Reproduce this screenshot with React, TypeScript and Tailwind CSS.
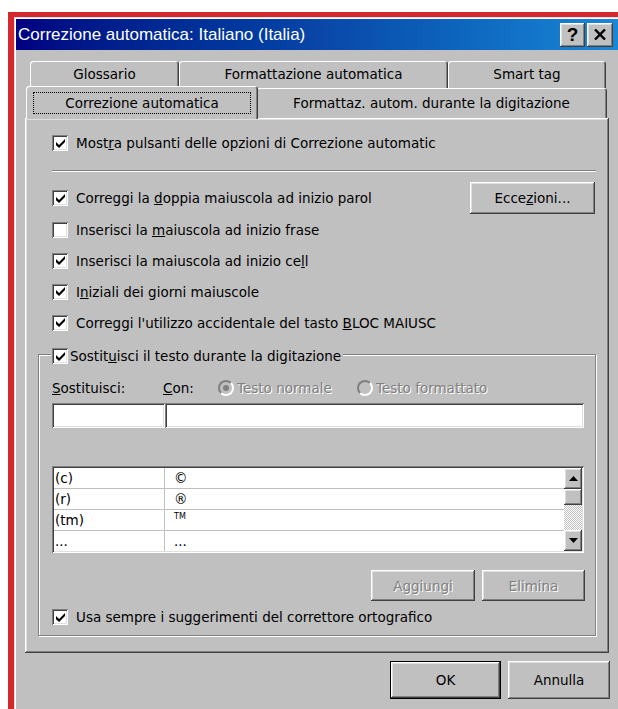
import React from "react";

// classic 3D bevels
const raised =
  "shadow-[inset_-1px_-1px_#404040,inset_1px_1px_#ffffff,inset_-2px_-2px_#808080,inset_2px_2px_#dfdfdf]";
const sunken =
  "shadow-[inset_1px_1px_#808080,inset_-1px_-1px_#ffffff,inset_2px_2px_#404040,inset_-2px_-2px_#dfdfdf]";
const disabledText = "text-[#808080] [text-shadow:1px_1px_0_#ffffff]";

function CheckBox({ checked }: { checked?: boolean }) {
  return (
    <span className={`flex h-[16px] w-[16px] shrink-0 items-center justify-center bg-white ${sunken}`}>
      {checked && (
        <svg width="9" height="9" viewBox="0 0 7 7">
          <polygon points="0,2.4 2.4,4.6 7,0 7,2.4 2.4,7 0,4.8" fill="#000" />
        </svg>
      )}
    </span>
  );
}

function Option({ checked, children }: { checked?: boolean; children: React.ReactNode }) {
  return (
    <div className="flex items-center gap-[8px]">
      <CheckBox checked={checked} />
      <span className="whitespace-nowrap">{children}</span>
    </div>
  );
}

function Radio({ selected }: { selected?: boolean }) {
  return (
    <span className="flex h-[16px] w-[16px] shrink-0 items-center justify-center rounded-full border-2 border-b-white border-l-[#808080] border-r-white border-t-[#808080] bg-[#c0c0c0]">
      {selected && <span className="h-[6px] w-[6px] rounded-full bg-[#808080]" />}
    </span>
  );
}

function Button({
  children,
  className = "",
  disabled,
}: {
  children: React.ReactNode;
  className?: string;
  disabled?: boolean;
}) {
  return (
    <div
      className={`flex items-center justify-center bg-[#c0c0c0] ${raised} ${disabled ? disabledText : ""} ${className}`}
    >
      {children}
    </div>
  );
}

function Tab({
  label,
  className = "",
}: {
  label: string;
  className?: string;
}) {
  return (
    <div
      className={`flex items-center justify-center rounded-t-[3px] bg-[#c0c0c0] shadow-[inset_1px_1px_#ffffff,inset_-1px_0_#404040,inset_-2px_0_#808080] ${className}`}
    >
      <span className="whitespace-nowrap">{label}</span>
    </div>
  );
}

function TitleBar() {
  return (
    <div className="flex h-[31px] items-center bg-gradient-to-r from-[#000080] via-[#0a46a8] to-[#1a88d6] pl-[2px] pr-[7px]">
      <span className="flex-1 font-['Liberation_Sans',Arial,sans-serif] text-[17px] leading-none text-white">
        Correzione automatica: Italiano (Italia)
      </span>
      <div className="flex gap-[2px]">
        <Button className="h-[24px] w-[25px] font-['Liberation_Sans',Arial,sans-serif] text-[19px] font-bold leading-none">
          ?
        </Button>
        <Button className="h-[24px] w-[26px]">
          <svg width="12" height="11" viewBox="0 0 12 11">
            <path d="M1 0.5 L11 10.5 M11 0.5 L1 10.5" stroke="#000" strokeWidth="2.4" />
          </svg>
        </Button>
      </div>
    </div>
  );
}

const ROWS = [
  ["(c)", "©"],
  ["(r)", "®"],
  ["(tm)", "™"],
  ["...", "..."],
];

function ScrollArrow({ up }: { up?: boolean }) {
  return (
    <Button className="h-[21px] w-[18px]">
      <svg width="9" height="5" viewBox="0 0 9 5">
        <polygon points={up ? "0,5 9,5 4.5,0" : "0,0 9,0 4.5,5"} fill="#000" />
      </svg>
    </Button>
  );
}

function ReplaceList() {
  return (
    <div className={`mt-[38px] flex h-[87px] w-[532px] bg-white p-[2px] ${sunken}`}>
      <div className="flex-1 overflow-hidden">
        {ROWS.map(([from, to]) => (
          <div key={from} className="flex h-[21px] border-b border-[#c0c0c0]">
            <span className="flex w-[111px] items-center border-r border-[#c0c0c0] pl-[1px]">{from}</span>
            <span className="flex flex-1 items-center pl-[9px]">
              {to === "™" ? <span className="-mt-[6px] text-[8px]">TM</span> : to}
            </span>
          </div>
        ))}
      </div>
      <div className="flex w-[18px] flex-col">
        <ScrollArrow up />
        <Button className="h-[16px] w-[18px]">{null}</Button>
        <div className="flex-1 bg-[image:repeating-conic-gradient(#c0c0c0_0%_25%,#ffffff_0%_50%)] bg-[length:2px_2px]" />
        <ScrollArrow />
      </div>
    </div>
  );
}

function ReplaceGroup() {
  return (
    <div className="relative mt-[16px] h-[282px] w-[558px] border border-[#808080] pl-[13px] pt-[23px] shadow-[inset_1px_1px_#ffffff,1px_1px_#ffffff]">
      <div className="absolute -top-[9px] left-[12px] flex items-center gap-[2px] bg-[#c0c0c0] pl-[1px] pr-[2px]">
        <CheckBox checked />
        <span>
          Sostit<u>u</u>isci il testo durante la digitazione
        </span>
      </div>

      <div className="flex h-[20px] items-center">
        <span className="w-[111px]">
          <u>S</u>ostituisci:
        </span>
        <span className="w-[55px]">
          <u>C</u>on:
        </span>
        <div className="flex w-[139px] items-center gap-[3px]">
          <Radio selected />
          <span className={disabledText}>Testo normale</span>
        </div>
        <div className="flex items-center gap-[3px]">
          <Radio />
          <span className={disabledText}>Testo formattato</span>
        </div>
      </div>

      <div className="mt-[5px] flex">
        <div className={`h-[25px] w-[113px] bg-white ${sunken}`} />
        <div className={`h-[25px] w-[419px] bg-white ${sunken}`} />
      </div>

      <ReplaceList />

      <div className="mt-[17px] flex w-[533px] justify-end gap-[7px]">
        <Button disabled className="h-[31px] w-[104px]">
          Aggiungi
        </Button>
        <Button disabled className="h-[31px] w-[103px]">
          Elimina
        </Button>
      </div>

      <div className="mt-[6px]">
        <Option checked>
          Usa sempre i su<u>g</u>gerimenti del correttore ortografico
        </Option>
      </div>
    </div>
  );
}

export default function App() {
  return (
    <div className="h-[709px] w-[618px] overflow-hidden bg-white pl-[8px] pt-[12px] font-['DejaVu_Sans',Verdana,sans-serif] text-[13.5px] text-black">
      <div className="h-[720px] w-[620px] border-l-[6px] border-t-[5px] border-[#d2282e]">
        <div className="h-full w-[606px] bg-[#c0c0c0] pl-[2px] pt-[2px] shadow-[inset_1px_1px_#dfdfdf,inset_2px_2px_#ffffff]">
          <TitleBar />

          {/* back row of tabs */}
          <div className="mt-[11px] flex pl-[14px]">
            <Tab label="Glossario" className="h-[27px] w-[149px]" />
            <Tab label="Formattazione automatica" className="h-[27px] w-[269px]" />
            <Tab label="Smart tag" className="h-[27px] w-[158px]" />
          </div>

          {/* front row, active tab raised over the panel edge */}
          <div className="flex h-[30px] items-end pl-[12px]">
            <div className="relative z-10 -mb-[1px] -ml-[2px] -mr-[2px] flex h-[33px] w-[232px] rounded-t-[3px] bg-[#c0c0c0] px-[7px] pb-[5px] pt-[6px] shadow-[inset_1px_1px_#ffffff,inset_-1px_0_#404040,inset_-2px_0_#808080]">
              <span className="flex flex-1 items-center justify-center border border-dotted border-black">
                Correzione automatica
              </span>
            </div>
            <Tab label="Formattaz. autom. durante la digitazione" className="h-[30px] w-[351px]" />
          </div>

          {/* tab page */}
          <div className={`ml-[9px] h-[535px] w-[584px] px-[13px] pt-[15px] ${raised}`}>
            <div className="pl-[14px]">
              <Option checked>
                Most<u>r</u>a pulsanti delle opzioni di Correzione automatic
              </Option>
              <div className="mt-[17px] h-[2px] w-[544px] border-b border-t border-b-white border-t-[#808080]" />
              <div className="mt-[10px] flex h-[32px] w-[543px] items-center justify-between">
                <Option checked>
                  Correggi la <u>d</u>oppia maiuscola ad inizio parol
                </Option>
                <Button className="h-[32px] w-[125px]">
                  <span>
                    Ecce<u>z</u>ioni...
                  </span>
                </Button>
              </div>
              <div className="flex h-[31px] items-center">
                <Option>
                  Inserisci la <u>m</u>aiuscola ad inizio frase
                </Option>
              </div>
              <div className="flex h-[31px] items-center">
                <Option checked>
                  Inserisci la maiuscola ad inizio ce<u>l</u>l
                </Option>
              </div>
              <div className="flex h-[31px] items-center">
                <Option checked>
                  I<u>n</u>iziali dei giorni maiuscole
                </Option>
              </div>
              <div className="flex h-[31px] items-center">
                <Option checked>
                  Correggi l'utilizzo accidentale del tasto <u>B</u>LOC MAIUSC
                </Option>
              </div>
            </div>

            <ReplaceGroup />
          </div>

          <div className="ml-[374px] mt-[8px] flex gap-[7px]">
            <div className="h-[38px] w-[111px] border border-black">
              <Button className="h-full w-full">OK</Button>
            </div>
            <Button className="h-[38px] w-[102px]">Annulla</Button>
          </div>
        </div>
      </div>
    </div>
  );
}
